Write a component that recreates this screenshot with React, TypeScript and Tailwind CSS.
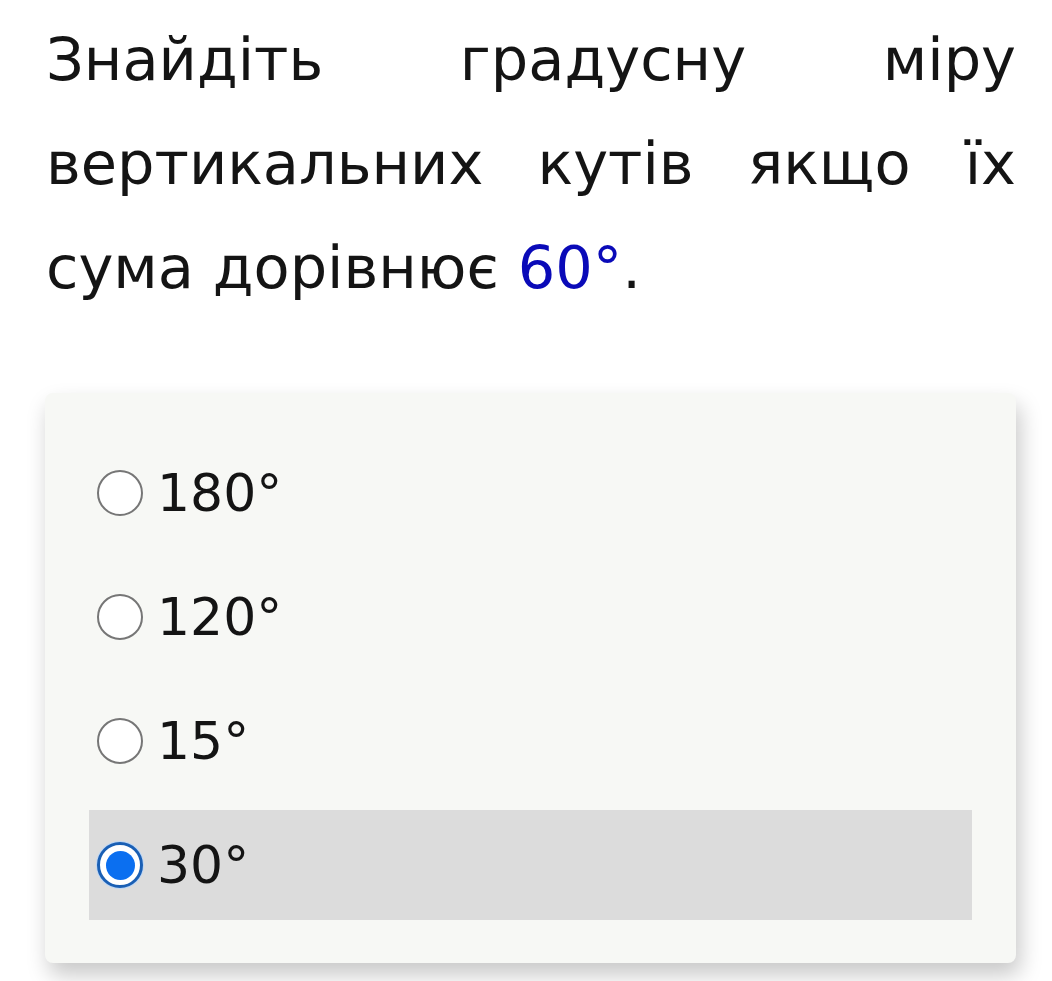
const options = [
  { label: "180°", checked: false },
  { label: "120°", checked: false },
  { label: "15°", checked: false },
  { label: "30°", checked: true },
];

const Radio: React.FC<{ checked: boolean }> = ({ checked }) =>
  checked ? (
    <div className="w-[46px] h-[46px] rounded-full border-[3px] border-[#1a5fb4] bg-white flex items-center justify-center shrink-0 shadow-[0_0_0_1px_#bcd6f5]">
      <div className="w-[29px] h-[29px] rounded-full bg-[#0b6ff0]"></div>
    </div>
  ) : (
    <div className="w-[46px] h-[46px] rounded-full border-2 border-[#767676] bg-white shrink-0"></div>
  );

export default function App() {
  return (
    <div className="min-h-screen bg-white font-['DejaVu_Sans',sans-serif] text-[#141414] pl-[46px] pr-[36px] pt-[8px]">
      <p className="text-[59px] leading-[104px] text-justify">
        Знайдіть градусну міру вертикальних кутів якщо їх сума дорівнює{" "}
        <span className="text-[#0a0ab8]">60°</span>.
      </p>

      <div className="mt-[73px] ml-[-1px] w-[971px] bg-[#f7f8f5] rounded-lg shadow-[4px_12px_22px_rgba(0,0,0,0.22)] px-[44px] pt-[45px] pb-[43px] flex flex-col gap-[14px]">
        {options.map((o) => (
          <div
            key={o.label}
            className={`h-[110px] flex items-center gap-[14px] pl-[8px] ${o.checked ? "bg-[#dcdcdc]" : ""}`}
          >
            <Radio checked={o.checked} />
            <span className="text-[52px] leading-none">{o.label}</span>
          </div>
        ))}
      </div>
    </div>
  );
}
